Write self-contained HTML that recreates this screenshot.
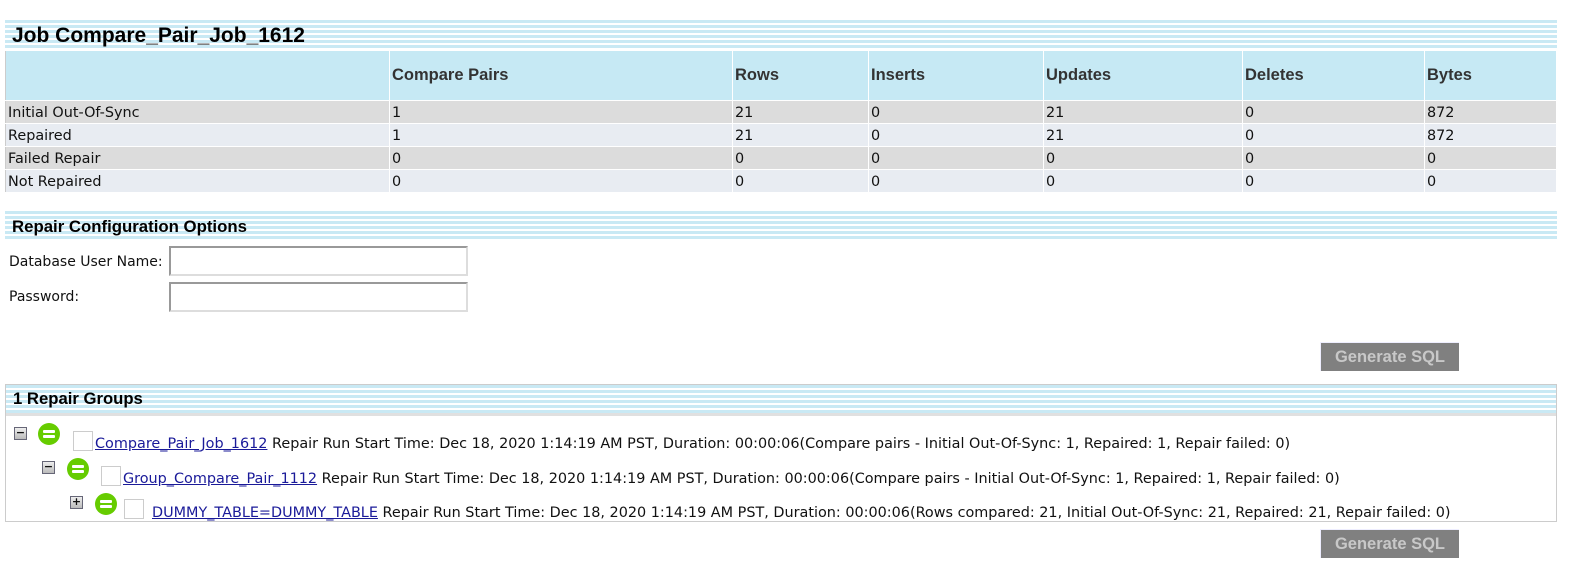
<!DOCTYPE html>
<html><head><style>
body{margin:0;width:1571px;height:565px;background:#fff;font-family:"DejaVu Sans",sans-serif;font-size:14.4px;color:#111;position:relative;overflow:hidden}
.a{position:absolute}
.stripe{background:repeating-linear-gradient(180deg,#c9e9f4 0,#c9e9f4 3px,#fff 3px,#fff 5px)}
.hd{font-weight:bold;color:#000;font-family:"Liberation Sans",sans-serif}
table{border-collapse:collapse;position:absolute;left:5px;top:50px;width:1552px;font-size:14.4px;border:1px solid #ccc}
td{border:1px solid #fff;border-left:1px solid #ccc;padding:2px 2px 0;height:20px;line-height:20px}
tr.h td{background:#c6e9f4;height:49px;line-height:49px;padding:0 2px;font-weight:bold;color:#333;font-size:16.5px;font-family:"Liberation Sans",sans-serif}
tr.g td{background:#dcdcdc}
tr.l td{background:#e8ecf2}
.inp{position:absolute;left:169px;width:295px;height:26px;border:2px solid #999;border-right-color:#ddd;border-bottom-color:#ddd;background:#fff}
.btn{position:absolute;left:1320px;width:139px;height:29px;background:#808080;color:#c8c8c8;font-weight:bold;font-size:16.5px;font-family:"Liberation Sans",sans-serif;text-align:center;line-height:29px;border-top:1px solid #eef;border-left:1px solid #eef;box-sizing:border-box}
.row{position:absolute;white-space:nowrap}
.row a{color:#1a1a99;text-decoration:underline}
.pm{display:inline-block;position:absolute;width:11px;height:11px;border:1px solid #667;background:linear-gradient(#eee,#bbb);font-size:11px;line-height:10px;text-align:center;font-weight:bold}
.ic{position:absolute;width:22px;height:22px;border-radius:50%;background:#6c0}
.ic:before,.ic:after{content:"";position:absolute;left:5px;width:12px;height:3px;background:#fff;border-radius:1px}
.ic:before{top:7px}.ic:after{top:12px}
.cb{position:absolute;width:18px;height:18px;border:1px solid #ccc;background:#fff}
</style></head><body>
<div class="a stripe" style="left:5px;top:20px;width:1552px;height:30px"></div>
<div class="a hd" style="left:12px;top:24px;font-size:21px">Job Compare_Pair_Job_1612</div>
<table>
<tr class="h"><td style="width:379px"></td><td style="width:338px">Compare Pairs</td><td style="width:131px">Rows</td><td style="width:170px">Inserts</td><td style="width:194px">Updates</td><td style="width:177px">Deletes</td><td>Bytes</td></tr>
<tr class="g"><td>Initial Out-Of-Sync</td><td>1</td><td>21</td><td>0</td><td>21</td><td>0</td><td>872</td></tr>
<tr class="l"><td>Repaired</td><td>1</td><td>21</td><td>0</td><td>21</td><td>0</td><td>872</td></tr>
<tr class="g"><td>Failed Repair</td><td>0</td><td>0</td><td>0</td><td>0</td><td>0</td><td>0</td></tr>
<tr class="l"><td>Not Repaired</td><td>0</td><td>0</td><td>0</td><td>0</td><td>0</td><td>0</td></tr>
</table>
<div class="a stripe" style="left:5px;top:211px;width:1552px;height:30px"></div>
<div class="a hd" style="left:12px;top:217px;font-size:16.8px">Repair Configuration Options</div>
<div class="a" style="left:9px;top:254px;font-size:14px">Database User Name:</div>
<div class="inp" style="top:246px"></div>
<div class="a" style="left:9px;top:289px;font-size:14px">Password:</div>
<div class="inp" style="top:282px"></div>
<div class="btn" style="top:342px">Generate SQL</div>
<div class="a" style="left:5px;top:384px;width:1550px;height:136px;border:1px solid #ccc"></div>
<div class="a stripe" style="left:6px;top:385px;width:1550px;height:28px"></div>
<div class="a" style="left:6px;top:413px;width:1550px;height:3px;background:#e0e0e0"></div>
<div class="a hd" style="left:13px;top:389px;font-size:16.7px">1 Repair Groups</div>
<div class="pm" style="left:14px;top:427px">−</div><div class="ic" style="left:38px;top:423px"></div><div class="cb" style="left:73px;top:431px"></div>
<div class="row" style="left:95px;top:436px"><a>Compare_Pair_Job_1612</a> Repair Run Start Time: Dec 18, 2020 1:14:19 AM PST, Duration: 00:00:06(Compare pairs - Initial Out-Of-Sync: 1, Repaired: 1, Repair failed: 0)</div>
<div class="pm" style="left:42px;top:461px">−</div><div class="ic" style="left:67px;top:458px"></div><div class="cb" style="left:101px;top:466px"></div>
<div class="row" style="left:123px;top:471px"><a>Group_Compare_Pair_1112</a> Repair Run Start Time: Dec 18, 2020 1:14:19 AM PST, Duration: 00:00:06(Compare pairs - Initial Out-Of-Sync: 1, Repaired: 1, Repair failed: 0)</div>
<div class="pm" style="left:70px;top:496px">+</div><div class="ic" style="left:95px;top:493px"></div><div class="cb" style="left:124px;top:499px"></div>
<div class="row" style="left:152px;top:505px"><a>DUMMY_TABLE=DUMMY_TABLE</a> Repair Run Start Time: Dec 18, 2020 1:14:19 AM PST, Duration: 00:00:06(Rows compared: 21, Initial Out-Of-Sync: 21, Repaired: 21, Repair failed: 0)</div>
<div class="btn" style="top:529px">Generate SQL</div>
</body></html>
